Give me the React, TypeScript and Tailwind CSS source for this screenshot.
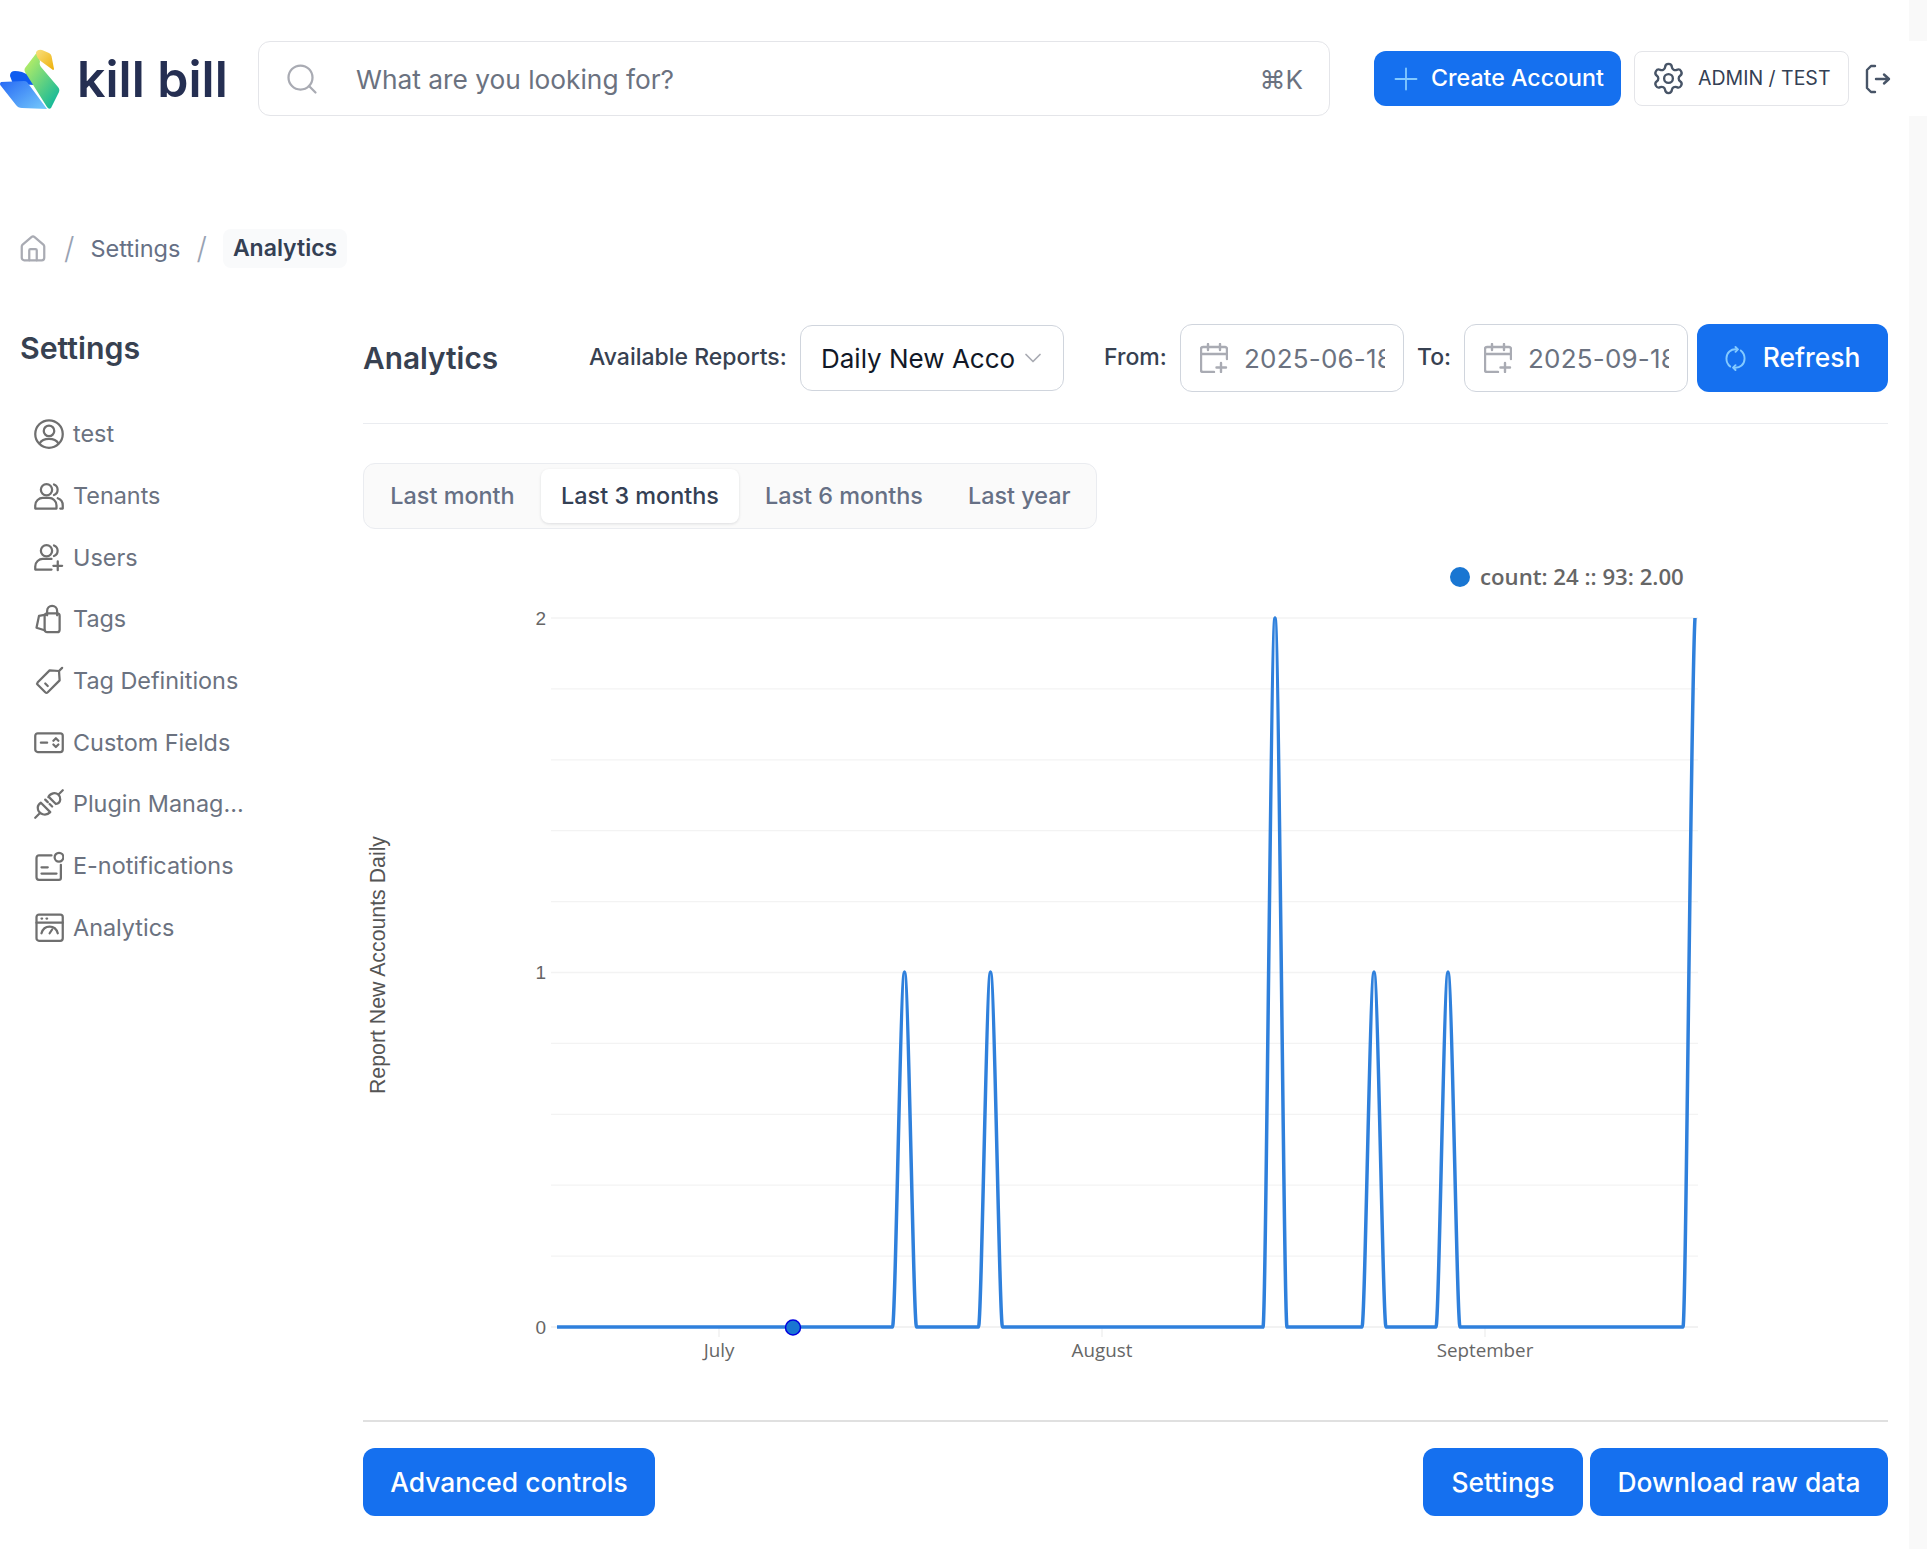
import { useId } from "react";
import { Home, Search, Plus, Settings as Gear, ChevronDown } from "lucide-react";

const ic = "w-[30px] h-[30px] text-[#6f6f6f] shrink-0";

function I({ children }: { children: React.ReactNode }) {
  return (
    <svg viewBox="0 0 24 24" fill="none" stroke="currentColor" strokeWidth={1.8} strokeLinecap="round" strokeLinejoin="round" className={ic}>
      {children}
    </svg>
  );
}

const nav: [string, React.ReactNode][] = [
  ["test", <I><circle cx="12" cy="12" r="11" /><circle cx="12" cy="9.500" r="4.200" /><path d="M4.500 19.500c1.500-2.600 4-3.600 7.500-3.600s6 1 7.500 3.600" /></I>],
  ["Tenants", <I><circle cx="10" cy="7" r="4.500" /><path d="M1 22v-2.500c0-3.500 3-6 6-6h5c3 0 6 2.500 6 6V22Z" /><path d="M16 2.800a4.500 4.500 0 0 1 0 8.400M19 13.800c2.500.8 4 2.900 4 5.700V22h-2" /></I>],
  ["Users", <I><circle cx="10" cy="7" r="4.500" /><path d="M1 22v-2.500c0-3.500 3-6 6-6h7M1 22h13" /><path d="M16 2.800a4.500 4.500 0 0 1 0 8.400M19 15.500v7M15.500 19h7" /></I>],
  ["Tags", <I><path d="M9.500 8.500 4 9.500 2 19l6.500 2" /><rect x="8.500" y="8" width="12" height="15" rx="2" transform="translate(0 -.5)" /><path d="M10.500 9V5.500a4 4 0 0 1 8 0V9" /></I>],
  ["Tag Definitions", <I><path d="M12.500 3.500 20 4l.5 7.500-9.500 9.500a1.500 1.500 0 0 1-2 0l-6-6a1.500 1.500 0 0 1 0-2Z" /><path d="m9 14 2 2M20 4l2.500-2.500" /></I>],
  ["Custom Fields", <I><rect x="1" y="5" width="22" height="15" rx="2" /><path d="M5.500 12.500h5M15.500 11l2-2 2 2M15.500 14l2 2 2-2" /></I>],
  ["Plugin Manag...", <I><path d="M12 6.500 17.500 12c2-.3 3.300-1.700 3.500-3.500.2-1.500-.4-3-1.500-4-1.200-1-2.800-1.400-4.300-1-1.700.5-3.300 1.800-3.700 3Z" /><path d="M5.500 11 13 18.500c-1.800 1.800-4 2.300-6 1.700-2.300-.7-4-3-4-5.400 0-1.500 1-2.800 2.500-3.800Z" /><path d="m20 4 3-3M4 20l-3 3M9 8.500l2 2M12.500 12l2 2" /></I>],
  ["E-notifications", <I><path d="M14 3.500H4a2 2 0 0 0-2 2V21a2 2 0 0 0 2 2h16a1.500 1.500 0 0 0 1.500-1.500V11" /><circle cx="20" cy="5" r="3.500" /><path d="M6 13h5M6 18h12" /></I>],
  ["Analytics", <I><rect x="2" y="2" width="21" height="21" rx="2" /><path d="M2 8.500h21M6 5.200h.5M10 5.200h.5M6 17c2-7 11-7 13 0M12.500 17l2-3" /></I>],
];

function CalendarPlus() {
  return (
    <svg viewBox="0 0 28 30" fill="none" stroke="#a9abb3" strokeWidth={2.400} strokeLinecap="round" strokeLinejoin="round" className="w-[28px] h-[30px] shrink-0">
      <path d="M27 16V6a2 2 0 0 0-2-2H3a2 2 0 0 0-2 2v21a2 2 0 0 0 2 2h11M1 11h26M8 1v6M20 1v6M21 20v9M16.500 24.500h9.500" />
    </svg>
  );
}

function RefreshArcs() {
  return (
    <svg viewBox="0 0 22 26" fill="none" stroke="#84caff" strokeWidth={2} strokeLinecap="round" strokeLinejoin="round" className="w-[21px] h-[25px] shrink-0">
      <path d="M13 3.500C6 2.500 1.500 7 1.500 13c0 3.500 1.500 6.500 4 8.500" />
      <path d="M9 22.500c7 1 11.500-3.500 11.500-9.500 0-3.500-1.500-6.500-4-8.500" />
      <path d="m11 1 2.500 2.500L11 6M11 20l-2.500 2.500L11 25" />
    </svg>
  );
}

function Logo() {
  const id = useId();
  return (
    <svg viewBox="0 0 60 60" className="w-[60px] h-[60px] shrink-0">
      <defs>
        <linearGradient id={id + "a"} x1="0" y1="0.1" x2="1" y2="0.9"><stop offset="0" stopColor="#2a6df5" /><stop offset="1" stopColor="#72c6fb" /></linearGradient>
        <linearGradient id={id + "b"} x1="0.2" y1="0.1" x2="0.85" y2="0.95"><stop offset="0" stopColor="#b2ec67" /><stop offset="1" stopColor="#12b89a" /></linearGradient>
        <linearGradient id={id + "c"} x1="0" y1="0" x2="1" y2="1"><stop offset="0" stopColor="#f9e07f" /><stop offset="1" stopColor="#eeb009" /></linearGradient>
      </defs>
      <path d="M10 27Q10 22 15 22 18 22 22 23L33 28 35 36 13 35Z" fill="#0f5cf0" />
      <path d="M1 33Q-1 35 1 37L16 56Q18 59 22 59L47 60 27 33Q26 32 24 32Z" fill={`url(#${id}a)`} />
      <path d="M38 2 25 19Q24 21 25 23L47 58Q49 61 51 59L59 43Q60 40 58 38L41 18Q39 15 40 13Z" fill={`url(#${id}b)`} />
      <path d="M36 3Q38 0 42 1L49 4Q51 5 51.500 7L54 20Q54 21 53 21L42 13Q36 9 36 3Z" fill={`url(#${id}c)`} />
    </svg>
  );
}

const base = 1327;
const peak2 = 618;
const peak1 = 972;
const hw = 12;
const peaks: [number, number][] = [[904.5, peak1], [990.5, peak1], [1275, peak2], [1374, peak1], [1448, peak1]];
let d = `M557 ${base}`;
for (const [x, y] of peaks) {
  d += ` L${x - hw} ${base} C${x - hw + 3} ${base} ${x - 4} ${y} ${x} ${y} C${x + 4} ${y} ${x + hw - 3} ${base} ${x + hw} ${base}`;
}
d += ` L1683 ${base} C1686 ${base} 1691 ${peak2 + 60} 1695 ${peak2}`;

function Chart() {
  const gl = Array.from({ length: 11 }, (_, i) => 618 + i * 70.9);
  return (
    <svg viewBox="363 540 1525 860" className="w-full h-[860px] block" fontFamily="'Open Sans', sans-serif">
      {gl.map((y) => (
        <line key={y} x1="551" x2="1698" y1={y} y2={y} stroke={y > 1320 ? "#eeeeee" : "#f3f3f3"} strokeWidth={1.300} />
      ))}
      {[719, 1102, 1485].map((x) => (
        <line key={x} x1={x} x2={x} y1={1328} y2={1337} stroke="#eeeeee" strokeWidth={1.300} />
      ))}
      <g fontFamily="'Liberation Sans', sans-serif" fontSize="19" fill="#666666" textAnchor="end">
        <text x="546" y="625">2</text>
        <text x="546" y="979">1</text>
        <text x="546" y="1334">0</text>
      </g>
      <text x="719" y="1357" textAnchor="middle" fontSize="18.800" fill="#666666">July</text>
      <text x="1102" y="1357" textAnchor="middle" fontSize="18.800" fill="#666666">August</text>
      <text x="1485" y="1357" textAnchor="middle" fontSize="18.800" fill="#666666">September</text>
      <text transform="translate(385 965) rotate(-90)" textAnchor="middle" fontFamily="'Liberation Sans', sans-serif" fontSize="21.300" fill="#555555">Report New Accounts Daily</text>
      <circle cx="1460" cy="577" r="10" fill="#1976d2" />
      <text x="1480" y="585" fontSize="22.200" fontWeight={600} fill="#666666">count: 24 :: 93: 2.00</text>
      <path d={d} fill="none" stroke="#2f80dc" strokeWidth={3.500} strokeLinejoin="round" />
      <circle cx="793" cy="1327.500" r="7.500" fill="#1976d2" stroke="#0000e0" strokeWidth={1.500} />
    </svg>
  );
}

function DateBox({ value }: { value: string }) {
  return (
    <div className="w-[224px] h-[68px] shrink-0 flex items-center gap-[16px] pl-[19px] border border-[#d0d5dd] rounded-xl bg-white">
      <CalendarPlus />
      <span className="w-[141px] pt-[1px] overflow-hidden whitespace-nowrap text-[26px] text-[#6b7280] tracking-[0.2px]">{value}</span>
    </div>
  );
}

const btn = "shrink-0 h-[68px] rounded-xl bg-[#1570ef] text-white text-[26.400px] font-medium";
const label = "shrink-0 whitespace-nowrap h-[66px] flex items-center text-[23px] font-medium text-[#374151]";

export default function App() {
  return (
    <div className="h-[1549px] bg-[#f9f9f9] overflow-hidden font-['Inter',sans-serif]">
      <div className="h-full mr-[18px] bg-white pt-[41px]">
        <header className="h-[75px] mr-[-18px] bg-white flex items-center">
          <Logo />
          <span className="ml-[17px] w-[167px] shrink-0 text-[50px] leading-none font-semibold text-[#252f52]">kill bill</span>
          <div className="ml-[14px] w-[1072px] shrink-0 h-[75px] border border-[#e4e5e9] rounded-xl flex items-center pl-[25px] pr-[26px]">
            <Search className="w-[36px] h-[36px] text-[#a9abb3]" strokeWidth={1.500} />
            <span className="ml-[36px] flex-1 pt-[2px] text-[26.300px] text-[#6b7280]">What are you looking for?</span>
            <span className="text-[26px] pt-[1px] text-[#6b7280]">⌘K</span>
          </div>
          <button className="ml-[44px] w-[247px] shrink-0 h-[55px] rounded-xl bg-[#1570ef] text-white text-[23.200px] font-medium flex items-center pl-[14px]">
            <Plus className="w-[36px] h-[36px] text-[#84caff]" strokeWidth={1.200} />
            <span className="ml-[7px]">Create Account</span>
          </button>
          <div className="ml-[13px] w-[215px] shrink-0 h-[55px] border border-[#e4e5e9] rounded-lg flex items-center gap-[12px] pl-[16px]">
            <Gear className="w-[35px] h-[35px] text-[#475467]" strokeWidth={1.600} />
            <span className="text-[19.500px] text-[#344054]">ADMIN / TEST</span>
          </div>
          <svg viewBox="0 0 26 30" fill="none" stroke="#475467" strokeWidth={2.400} strokeLinecap="round" strokeLinejoin="round" className="ml-[16px] w-[26px] h-[30px] shrink-0">
            <path d="M10 2H6L2 6v18l4 4h4M11 15h13M19 10.500l5 4.500-5 4.500" />
          </svg>
        </header>

        <nav className="mt-[113px] h-[39px] flex items-center pl-[18px] text-[23.500px]">
          <Home className="w-[30px] h-[30px] text-[#a9abb3]" strokeWidth={1.800} />
          <span className="ml-[16px] text-[#98a2b3] text-[30px] font-light">/</span>
          <span className="ml-[16px] text-[#667085]">Settings</span>
          <span className="ml-[16px] text-[#98a2b3] text-[30px] font-light">/</span>
          <span className="ml-[16px] h-[39px] px-[10px] flex items-center rounded-lg bg-[#f9fafb] text-[23px] font-semibold text-[#344054]">Analytics</span>
        </nav>

        <div className="mt-[56px] flex">
          <aside className="w-[363px] shrink-0 pl-[20px]">
            <h2 className="mt-[5px] text-[30.300px] leading-[38px] font-semibold text-[#374151]">Settings</h2>
            <ul className="mt-[36px] pl-[14px] flex flex-col">
              {nav.map(([text, icon]) => (
                <li key={text} className="h-[61.700px] flex items-center gap-[9px] text-[23.400px] text-[#6b7280]">
                  {icon}
                  <span>{text}</span>
                </li>
              ))}
            </ul>
          </aside>

          <main className="w-[1525px] shrink-0">
            <div className="h-[100px] border-b border-[#eaecf0] flex items-start">
              <h1 className="shrink-0 w-[135px] h-[68px] flex items-center text-[29.800px] font-semibold text-[#374151]">Analytics</h1>
              <span className={"ml-[91px] w-[198px] " + label}>Available Reports:</span>
              <div className="ml-[13px] mt-[1px] w-[264px] shrink-0 h-[66px] border border-[#d0d5dd] rounded-xl flex items-center pl-[20px]">
                <span className="w-[195px] pt-[1px] overflow-hidden whitespace-nowrap text-[26px] text-[#111827]">Daily New Accounts Daily</span>
                <ChevronDown className="ml-[3px] w-[28px] h-[28px] text-[#a9abb3]" strokeWidth={1.500} />
              </div>
              <span className={"ml-[40px] w-[63px] " + label}>From:</span>
              <div className="ml-[13px] shrink-0"><DateBox value="2025-06-18" /></div>
              <span className={"ml-[13px] w-[33px] " + label}>To:</span>
              <div className="ml-[14px] shrink-0"><DateBox value="2025-09-18" /></div>
              <button className={"ml-[9px] w-[191px] flex items-center justify-center gap-[17px] " + btn}>
                <RefreshArcs />
                Refresh
              </button>
            </div>

            <div className="mt-[39px] w-[734px] h-[66px] bg-[#fafafa] border border-[#eaecf0] rounded-xl flex items-center px-[6px] text-[23.400px] font-medium text-[#667085] whitespace-nowrap">
              <span className="w-[171px] shrink-0 pr-[6px] text-center">Last month</span>
              <span className="w-[198px] shrink-0 h-[54px] flex items-center justify-center bg-white rounded-lg text-[#344054] shadow-[0_1px_3px_rgba(16,24,40,0.12)]">Last 3 months</span>
              <span className="ml-[26px] w-[157px] shrink-0 text-center">Last 6 months</span>
              <span className="ml-[46px] w-[101px] shrink-0 text-center">Last year</span>
            </div>

            <div className="mt-[11px]"><Chart /></div>

            <div className="mt-[20px] border-t-2 border-[#e0e0e0] pt-[26px] flex items-center">
              <button className={"w-[292px] pt-[2px] " + btn}>Advanced controls</button>
              <button className={"ml-auto w-[160px] pt-[2px] " + btn}>Settings</button>
              <button className={"ml-[7px] w-[298px] pt-[2px] " + btn}>Download raw data</button>
            </div>
          </main>
        </div>
      </div>
    </div>
  );
}
